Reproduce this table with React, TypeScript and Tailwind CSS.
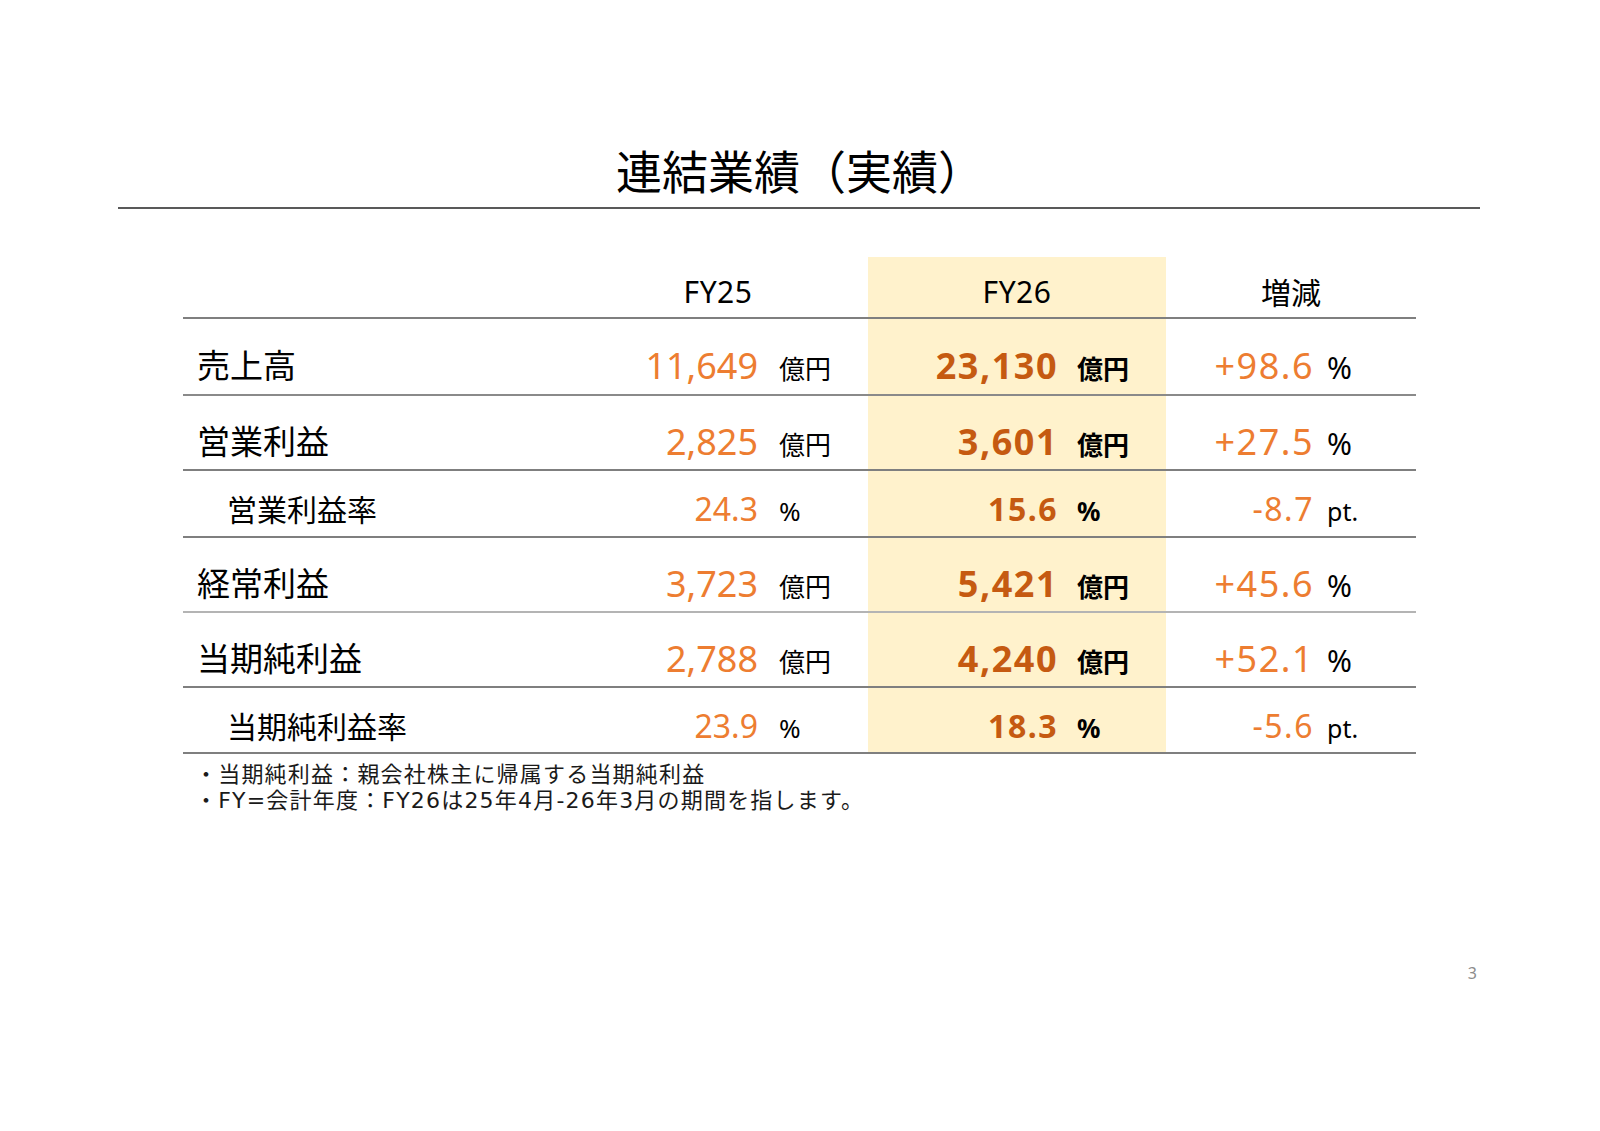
const jp = "font-['Noto_Sans_CJK_JP',sans-serif]";
const num = "font-['Noto_Sans','Noto_Sans_CJK_JP',sans-serif]";
const note = "font-['DejaVu_Sans','Noto_Sans_CJK_JP',sans-serif]";

type Row = {
  label: string;
  sub: boolean;
  fy25: string;
  fy26: string;
  unit: string;
  diff: string;
  dunit: string;
  h: string;
  pt: string;
  line: string;
};

const rows: Row[] = [
  { label: '売上高', sub: false, fy25: '11,649', fy26: '23,130', unit: '億円', diff: '+98.6', dunit: '%', h: 'h-[77px]', pt: 'pt-[29px]', line: 'border-[#8a8a8a]' },
  { label: '営業利益', sub: false, fy25: '2,825', fy26: '3,601', unit: '億円', diff: '+27.5', dunit: '%', h: 'h-[75px]', pt: 'pt-[28px]', line: 'border-[#7f7f7f]' },
  { label: '営業利益率', sub: true, fy25: '24.3', fy26: '15.6', unit: '%', diff: '-8.7', dunit: 'pt.', h: 'h-[67px]', pt: 'pt-[22px]', line: 'border-[#7f7f7f]' },
  { label: '経常利益', sub: false, fy25: '3,723', fy26: '5,421', unit: '億円', diff: '+45.6', dunit: '%', h: 'h-[75px]', pt: 'pt-[28px]', line: 'border-[#b4b4b4]' },
  { label: '当期純利益', sub: false, fy25: '2,788', fy26: '4,240', unit: '億円', diff: '+52.1', dunit: '%', h: 'h-[75px]', pt: 'pt-[28px]', line: 'border-[#7f7f7f]' },
  { label: '当期純利益率', sub: true, fy25: '23.9', fy26: '18.3', unit: '%', diff: '-5.6', dunit: 'pt.', h: 'h-[66px]', pt: 'pt-[22px]', line: 'border-[#7f7f7f]' },
];

function Unit({ text, bold, sub }: { text: string; bold?: boolean; sub: boolean }) {
  if (text === '億円') {
    return <span className={`${jp} text-[26px] ${bold ? 'font-bold' : 'font-normal'}`}>{text}</span>;
  }
  if (text === '%') {
    return <span className={`${num} ${sub ? 'text-[26px]' : 'text-[30px]'} ${bold ? 'font-bold' : 'font-normal'}`}>{text}</span>;
  }
  return <span className={`${num} text-[25px]`}>{text}</span>;
}

function TableRow({ r }: { r: Row }) {
  const size = r.sub ? 'text-[32px]' : 'text-[36px]';
  return (
    <div className={`grid grid-cols-[385px_300px_298px_250px] ${r.h} border-b-2 ${r.line}`}>
      <div className={`flex items-baseline leading-none ${r.pt} ${r.sub ? 'pl-[44px] text-[30px]' : 'pl-[14px] text-[33px]'} ${jp}`}>
        {r.label}
      </div>
      <div className={`flex items-baseline leading-none ${r.pt}`}>
        <span className={`w-[190px] text-right text-[#ed7d31] ${num} ${size}`}>{r.fy25}</span>
        <span className="ml-[21px]">
          <Unit text={r.unit} sub={r.sub} />
        </span>
      </div>
      <div className={`flex items-baseline leading-none bg-[#fff2cc] ${r.pt}`}>
        <span className={`w-[190px] text-right font-bold tracking-[1.5px] text-[#c55a11] ${num} ${size}`}>{r.fy26}</span>
        <span className="ml-[19px]">
          <Unit text={r.unit} sub={r.sub} bold />
        </span>
      </div>
      <div className={`flex items-baseline leading-none ${r.pt}`}>
        <span className={`w-[148px] text-right tracking-[1.5px] text-[#ed7d31] ${num} ${size}`}>{r.diff}</span>
        <span className="ml-[13px]">
          <Unit text={r.dunit} sub={r.sub} />
        </span>
      </div>
    </div>
  );
}

export default function App() {
  return (
    <div className="w-[1600px] h-[1131px] bg-white text-black overflow-hidden">
      <div className="pt-[146px]">
        <h1 className={`text-center text-[46px] leading-none font-normal ${jp}`}>連結業績（実績）</h1>
        <div className="mt-[15px] ml-[118px] w-[1362px] h-[2px] bg-[#595959]" />
      </div>

      <div className="ml-[183px] mt-[48px] w-[1233px]">
        <div className="grid grid-cols-[385px_300px_298px_250px] h-[62px] border-b-2 border-[#7f7f7f]">
          <div />
          <div className={`flex justify-center items-baseline leading-none pt-[20px] text-[30px] tracking-[0.5px] ${num}`}>FY25</div>
          <div className={`flex justify-center items-baseline leading-none pt-[20px] text-[30px] tracking-[0.5px] bg-[#fff2cc] ${num}`}>FY26</div>
          <div className={`flex justify-center items-baseline leading-none pt-[19px] text-[30px] ${jp}`}>増減</div>
        </div>
        {rows.map((r) => (
          <TableRow key={r.label} r={r} />
        ))}

        <div className={`mt-[8px] pl-[12px] text-[22px] leading-[26px] tracking-[1.2px] text-[#1a1a1a] ${note}`}>
          <p>・当期純利益：親会社株主に帰属する当期純利益</p>
          <p>・FY=会計年度：FY26は25年4月-26年3月の期間を指します。</p>
        </div>
      </div>

      <div className={`mt-[151px] flex justify-end pr-[123px] text-[16px] leading-none text-[#8c8c8c] ${num}`}>3</div>
    </div>
  );
}
